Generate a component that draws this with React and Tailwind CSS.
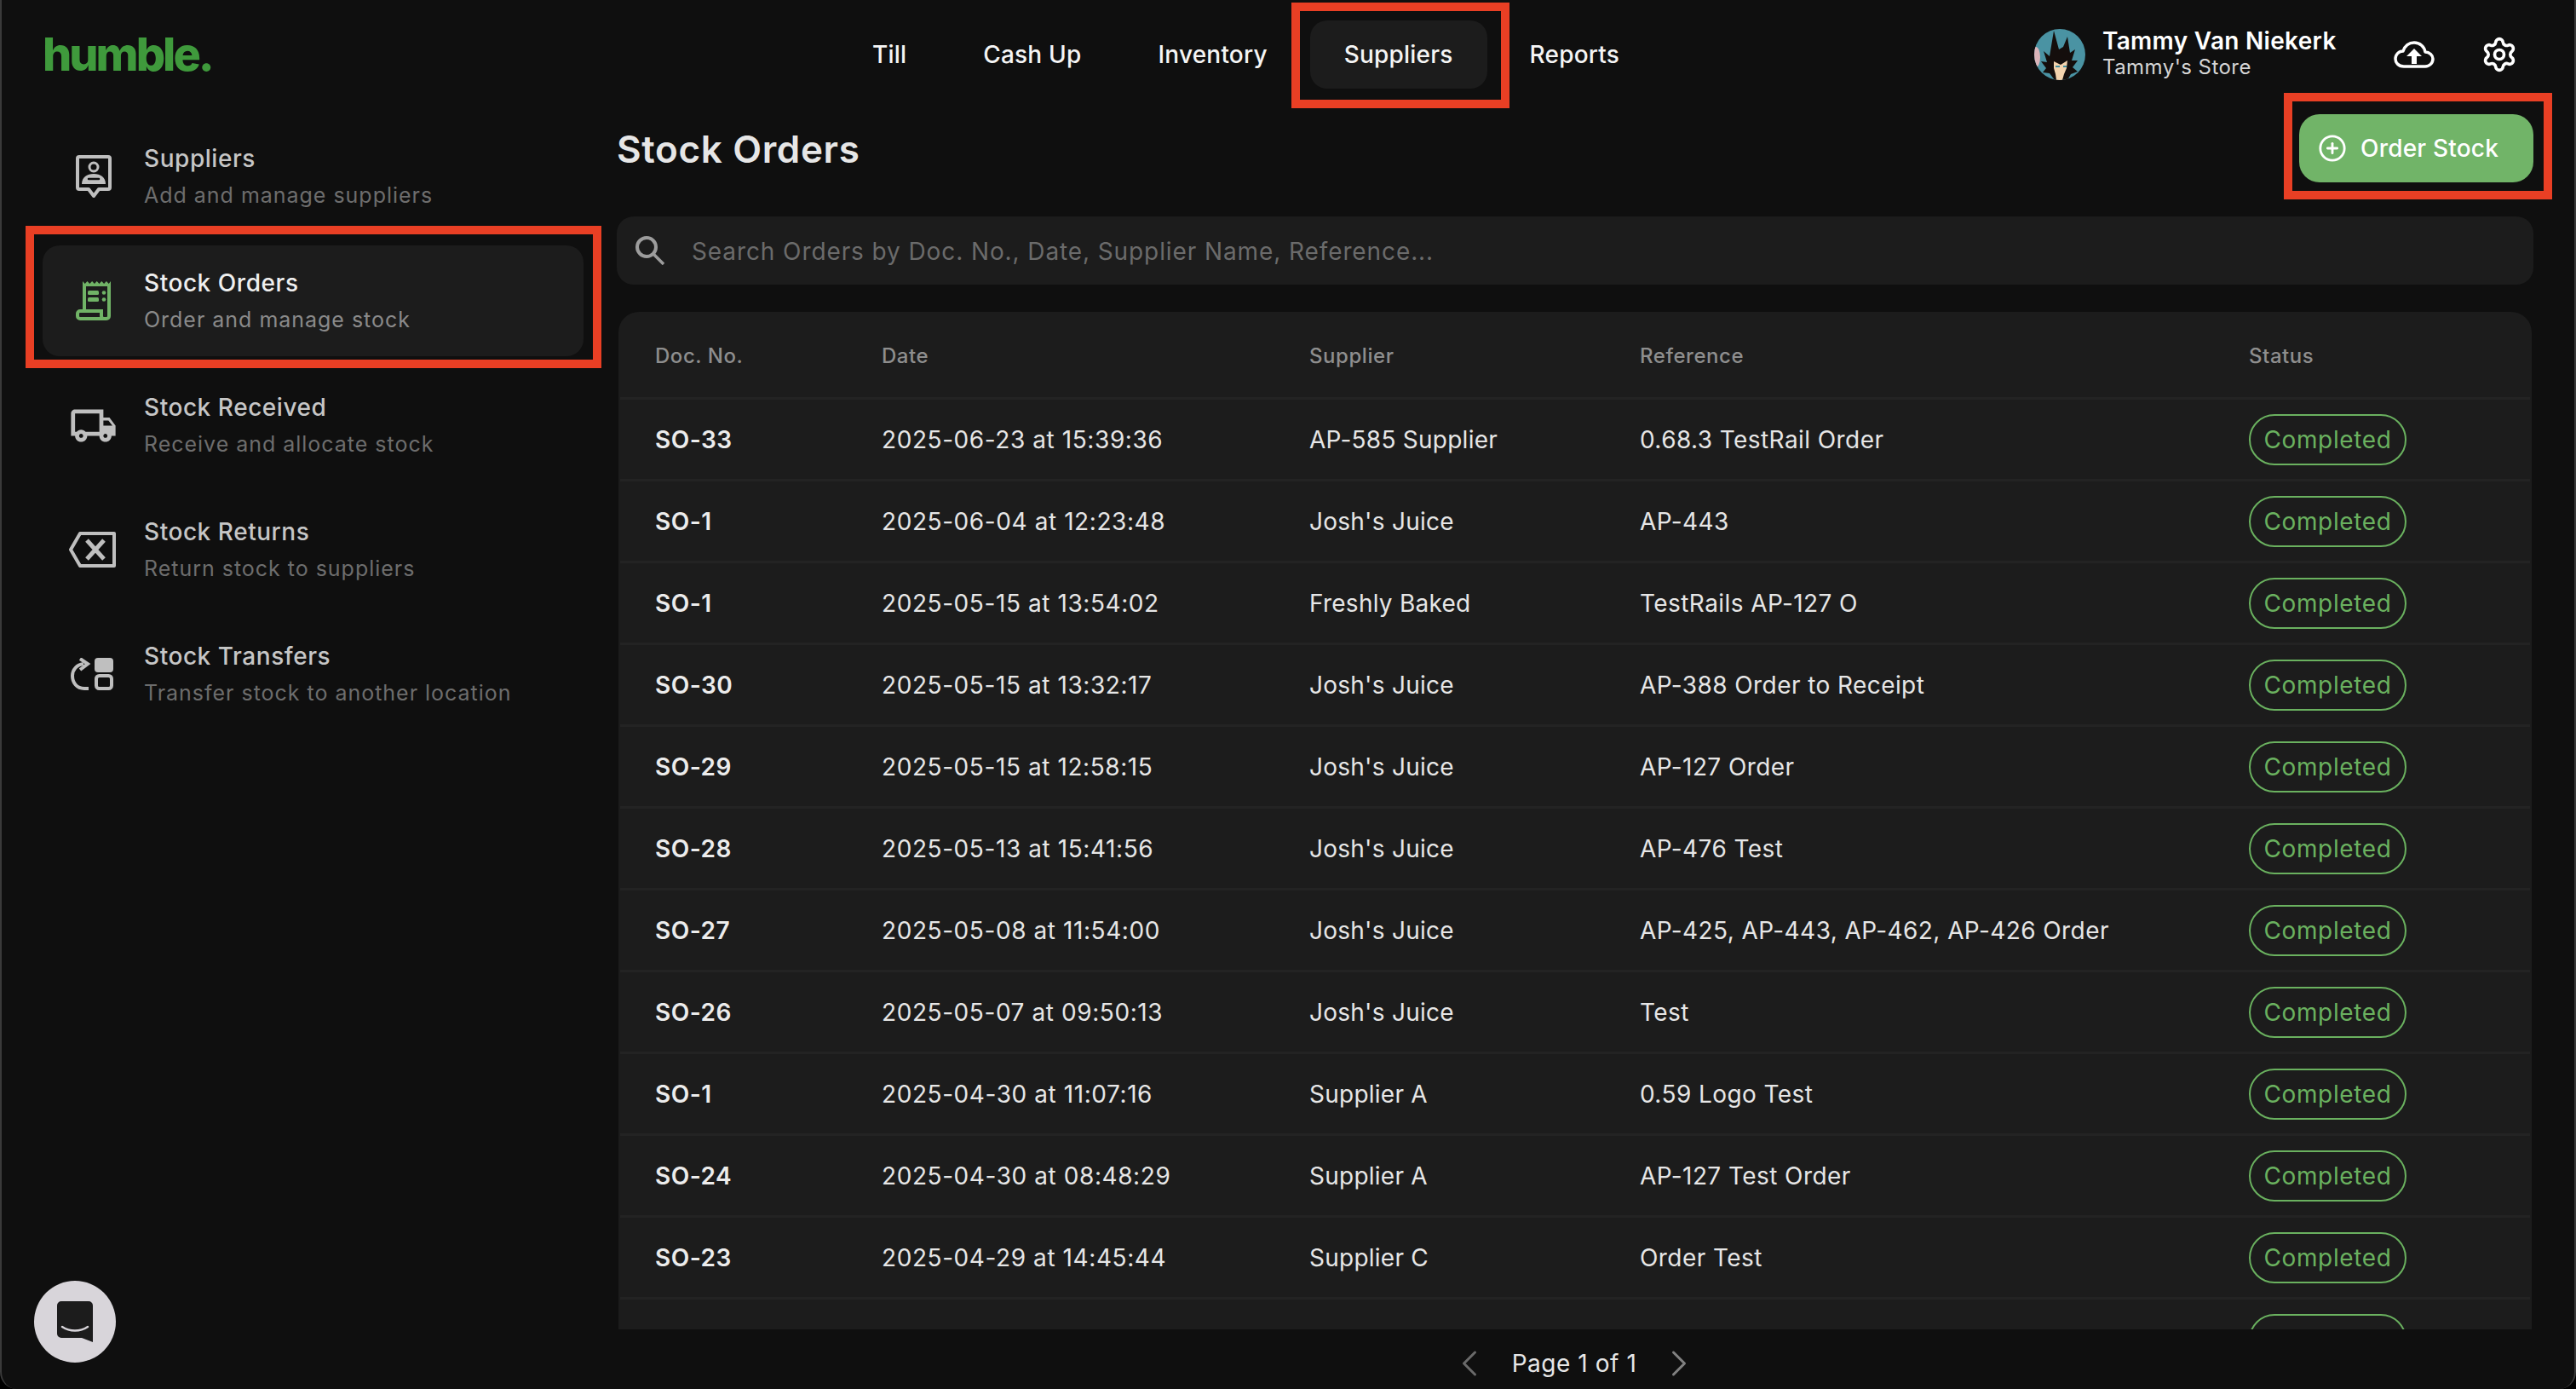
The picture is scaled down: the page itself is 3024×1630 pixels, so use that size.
import React from "react";
import { CirclePlus, ChevronLeft, ChevronRight, Settings } from "lucide-react";
import { MdOutlineLocalShipping } from "react-icons/md";

const rows = [
  ["SO-33", "2025-06-23 at 15:39:36", "AP-585 Supplier", "0.68.3 TestRail Order"],
  ["SO-1", "2025-06-04 at 12:23:48", "Josh's Juice", "AP-443"],
  ["SO-1", "2025-05-15 at 13:54:02", "Freshly Baked", "TestRails AP-127 O"],
  ["SO-30", "2025-05-15 at 13:32:17", "Josh's Juice", "AP-388 Order to Receipt"],
  ["SO-29", "2025-05-15 at 12:58:15", "Josh's Juice", "AP-127 Order"],
  ["SO-28", "2025-05-13 at 15:41:56", "Josh's Juice", "AP-476 Test"],
  ["SO-27", "2025-05-08 at 11:54:00", "Josh's Juice", "AP-425, AP-443, AP-462, AP-426 Order"],
  ["SO-26", "2025-05-07 at 09:50:13", "Josh's Juice", "Test"],
  ["SO-1", "2025-04-30 at 11:07:16", "Supplier A", "0.59 Logo Test"],
  ["SO-24", "2025-04-30 at 08:48:29", "Supplier A", "AP-127 Test Order"],
  ["SO-23", "2025-04-29 at 14:45:44", "Supplier C", "Order Test"],
  ["", "", "", ""],
];

const SupplierIcon = () => (
  <svg width="42" height="50" viewBox="0 0 42 50" fill="none">
    <path d="M4 2h34a2 2 0 0 1 2 2v34a2 2 0 0 1-2 2H27l-6 8-6-8H4a2 2 0 0 1-2-2V4a2 2 0 0 1 2-2z" stroke="currentColor" strokeWidth="4" strokeLinejoin="round" />
    <circle cx="21" cy="14" r="5" stroke="currentColor" strokeWidth="3" />
    <path d="M7 34c0-8 6-12 14-12s14 4 14 12z" fill="currentColor" />
    <path d="M15 28h12" stroke="#0f0f0f" strokeWidth="2.5" strokeLinecap="round" />
  </svg>
);

const ReceiptIcon = () => (
  <svg width="42" height="48" viewBox="0 0 42 48" fill="none">
    <path d="M10 36V5M39 4v38a3 3 0 0 1-3 3H5a3 3 0 0 1-3-3v-3a3 3 0 0 1 3-3h25v6a3 3 0 0 0 3 3" stroke="currentColor" strokeWidth="4" />
    <path d="M8 1l2.700 3 2.800-3 2.800 3 2.800-3 2.800 3 2.800-3 2.800 3 2.800-3 2.800 3 2.800-3 2.800 3L41 1v6H8z" fill="currentColor" />
    <rect x="14" y="12" width="13" height="5" rx="1.500" fill="currentColor" />
    <rect x="14" y="20" width="13" height="5" rx="1.500" fill="currentColor" />
    <circle cx="33" cy="14.500" r="2.300" fill="currentColor" />
    <circle cx="33" cy="22.500" r="2.300" fill="currentColor" />
  </svg>
);

const TruckIcon = () => <MdOutlineLocalShipping size={57} className="-my-2 -mx-[3px]" />;

const ReturnIcon = () => (
  <svg width="56" height="42" viewBox="0 0 56 42" fill="none" className="-ml-[3px]">
    <path d="M14 2h40v38H14L3 21z" stroke="currentColor" strokeWidth="4" strokeLinejoin="round" />
    <path d="M22 10l20 22M42 10L22 32" stroke="currentColor" strokeWidth="5" />
  </svg>
);

const TransferIcon = () => (
  <svg width="50" height="38" viewBox="0 0 50 38" fill="none" className="-ml-[3px]">
    <rect x="28" y="0" width="22" height="17" rx="4" fill="currentColor" />
    <rect x="30" y="21" width="18" height="15" rx="3.500" stroke="currentColor" strokeWidth="4" />
    <path d="M21 36h-5C7 36 2 29 2 21c0-7 5-13 13-14" stroke="currentColor" strokeWidth="4" />
    <path d="M11 1l9 6-9 7" stroke="currentColor" strokeWidth="4" />
  </svg>
);

const CloudIcon = () => (
  <svg width="48" height="32" viewBox="0 0 48 32" fill="none">
    <path d="M12 30C5 30 2 25 2 21c0-5 4-9 9-9 2-6 7-10 13-10 7 0 12 5 13 11 5 0 9 4 9 8 0 5-4 9-9 9z" stroke="#fff" strokeWidth="3.500" strokeLinejoin="round" />
    <path d="M24 9l9 9h-6v9h-6v-9h-6z" fill="#fff" />
  </svg>
);

const SearchGlyph = () => (
  <svg width="34" height="34" viewBox="0 0 34 34" fill="none" className="shrink-0">
    <circle cx="13" cy="13" r="11" stroke="#9c9c9c" strokeWidth="4" />
    <path d="M21 21l12 12" stroke="#9c9c9c" strokeWidth="3.500" />
  </svg>
);

const Avatar = () => (
  <svg width="60" height="60" viewBox="0 0 60 60" className="shrink-0 rounded-full">
    <rect width="60" height="60" fill="#4a93a3" />
    <ellipse cx="2" cy="33" rx="5" ry="12" fill="#d9b3b8" />
    <path d="M24 60l-6-8-8-1 4-5-6-8 7 1-4-13 7 6 5-30 6 22 5-3 5-12 3 19 6-4-4 13 7 0-6 8 6 5-8 3-4 7z" fill="#140e0c" />
    <path d="M23 38l8 4 8-5-1 9-3 7-2 7H26l-1-7-2-7z" fill="#f3d3ad" />
    <path d="M25 44h5M34 44h4" stroke="#3f8ea0" strokeWidth="2" />
  </svg>
);

const ChatIcon = () => (
  <svg width="42" height="48" viewBox="0 0 42 48">
    <path d="M5 0h32a5 5 0 0 1 5 5v43l-13-5H5a5 5 0 0 1-5-5V5a5 5 0 0 1 5-5z" fill="#1c1c1c" />
    <path d="M6 30c9 6 21 6 30 0" stroke="#d8d5da" strokeWidth="2.500" fill="none" strokeLinecap="round" />
  </svg>
);

const SideItem = ({ icon, title, sub, active }) => (
  <div className={`relative flex h-[130px] items-center rounded-[20px] ${active ? "bg-[#1c1c1c] text-[#70b366]" : "text-[#bfbfbf]"}`}>
    <div className="flex w-[119px] shrink-0 items-center justify-center">{icon}</div>
    <div className="flex flex-col gap-[11px]">
      <div className={`text-[28px] leading-[32px] font-medium tracking-[0.55px] ${active ? "text-[#efefef]" : "text-[#c6c6c6]"}`}>{title}</div>
      <div className={`text-[25px] leading-[32px] tracking-[0.98px] ${active ? "text-[#8a8a8a]" : "text-[#6d6d6d]"}`}>{sub}</div>
    </div>
    {active && <div className="absolute -left-[20px] -right-[21px] -top-[23px] -bottom-[14px] border-[10px] border-[#e93f24]" />}
  </div>
);

const Badge = ({ label }) => (
  <div className="flex h-[60px] w-[185px] items-center justify-center rounded-full border-2 border-[#6ab15f] text-[28px] tracking-[0.65px] text-[#6ab15f]">{label}</div>
);

const cols = "grid grid-cols-[266px_502px_388px_715px_1fr] pl-[41px] items-center";

export default function App() {
  return (
    <div className="bg-black">
      <div className="flex h-[1630px] flex-col overflow-hidden rounded-b-[20px] border-x-2 border-[#3a3a3a] bg-[#0f0f0f] font-[Inter,sans-serif] text-[#e6e6e6]">
        <header className="flex h-[128px] shrink-0 items-center pl-[48px]">
          <div className="w-[934px] text-[54px] leading-none font-extrabold tracking-[-3px] text-[#3f9a3c]">humble.</div>
          <nav className="flex gap-[10px] text-[28px] font-medium tracking-[0.2px] text-[#f5f5f5]">
            {["Till", "Cash Up", "Inventory", "Suppliers", "Reports"].map((n) => (
              <div key={n} className={`relative flex h-[80px] items-center rounded-[20px] px-10 ${n === "Suppliers" ? "bg-[#1c1c1c]" : ""}`}>
                {n}
                {n === "Suppliers" && <div className="absolute -left-[22px] -right-[26px] -top-[21px] -bottom-[23px] border-[10px] border-[#e93f24]" />}
              </div>
            ))}
          </nav>
          <div className="ml-auto flex items-center pr-[66px]">
            <Avatar />
            <div className="-mt-[4px] ml-[20px] flex w-[342px] flex-col">
              <div className="text-[28px] leading-[33px] font-semibold tracking-[0.3px] text-white">Tammy Van Niekerk</div>
              <div className="text-[24px] leading-[28px] tracking-[0.45px] text-[#d6d6d6]">Tammy's Store</div>
            </div>
            <CloudIcon />
            <Settings size={44} strokeWidth={2} color="#fff" className="ml-[54px]" />
          </div>
        </header>
        <div className="flex min-h-0 flex-1">
          <aside className="relative w-[722px] shrink-0 pl-[48px] pr-[39px] pt-[14px]">
            <div className="flex flex-col gap-4">
              <SideItem icon={<SupplierIcon />} title="Suppliers" sub="Add and manage suppliers" />
              <SideItem active icon={<ReceiptIcon />} title="Stock Orders" sub="Order and manage stock" />
              <SideItem icon={<TruckIcon />} title="Stock Received" sub="Receive and allocate stock" />
              <SideItem icon={<ReturnIcon />} title="Stock Returns" sub="Return stock to suppliers" />
              <SideItem icon={<TransferIcon />} title="Stock Transfers" sub="Transfer stock to another location" />
            </div>
            <div className="absolute bottom-[31px] left-[38px] flex h-[96px] w-[96px] items-center justify-center rounded-full bg-[#d8d5da]">
              <ChatIcon />
            </div>
          </aside>
          <main className="flex min-w-0 flex-1 flex-col pr-[48px] pt-[6px]">
            <div className="flex h-[80px] shrink-0 items-center justify-between">
              <h1 className="mt-[2px] text-[44px] font-semibold tracking-[0.65px] text-[#e6e6e6]">Stock Orders</h1>
              <div className="relative flex h-[80px] w-[275px] items-center rounded-[24px] bg-[#71b468] pl-[22px] text-white">
                <CirclePlus size={34} strokeWidth={2} className="shrink-0" />
                <span className="ml-[16px] text-[28px] font-medium tracking-[0.2px]">Order Stock</span>
                <div className="absolute -left-[18px] -right-[22px] -top-[25px] -bottom-[20px] border-[10px] border-[#e93f24]" />
              </div>
            </div>
            <div className="mt-10 flex h-[80px] shrink-0 items-center rounded-[20px] bg-[#1c1c1c] pl-[22px]">
              <SearchGlyph />
              <span className="ml-[32px] mt-[1px] text-[28px] tracking-[0.9px] text-[#6b6b6b]">Search Orders by Doc. No., Date, Supplier Name, Reference...</span>
            </div>
            <div className="mx-[2px] mt-8 min-h-0 flex-1 overflow-hidden rounded-t-[24px] bg-[#1c1c1c] px-[2px]">
              <div className={`${cols} h-[103px] border-b-[3px] border-[#232323] pt-[4px] text-[24px] font-medium tracking-[0.55px] text-[#8e8e8e]`}>
                <div>Doc. No.</div>
                <div>Date</div>
                <div>Supplier</div>
                <div>Reference</div>
                <div>Status</div>
              </div>
              {rows.map((r, i) => (
                <div key={i} className={`${cols} h-[96px] shrink-0 border-b-[3px] border-[#232323] text-[28px]`}>
                  <div className="font-semibold tracking-[0.5px] text-[#ececec]">{r[0]}</div>
                  <div className="tracking-[0.58px]">{r[1]}</div>
                  <div className="tracking-[0.25px]">{r[2]}</div>
                  <div className="tracking-[0.42px]">{r[3]}</div>
                  <Badge label={r[0] ? "Completed" : ""} />
                </div>
              ))}
            </div>
            <div className="flex h-[70px] shrink-0 items-center justify-center pt-[10px]">
              <ChevronLeft size={52} strokeWidth={1.4} color="#6a6a6a" className="-ml-[2px]" />
              <span className="mx-[24px] text-[28px] tracking-[0.55px]">Page 1 of 1</span>
              <ChevronRight size={52} strokeWidth={1.4} color="#808080" />
            </div>
          </main>
        </div>
      </div>
    </div>
  );
}
